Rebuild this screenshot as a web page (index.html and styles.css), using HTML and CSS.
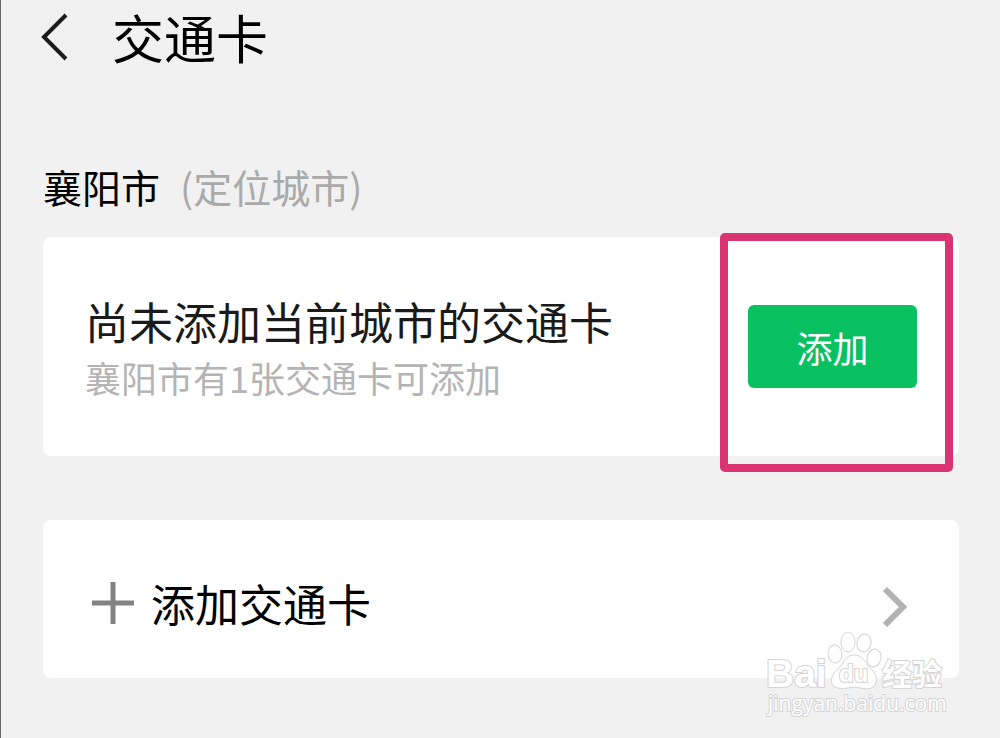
FILE: index.html
```html
<!DOCTYPE html>
<html lang="zh-CN">
<head>
  <meta charset="UTF-8">
  <meta name="viewport" content="width=device-width, initial-scale=1">
  <title>交通卡</title>
  <link rel="stylesheet" href="styles.css">
</head>
<body>
  <header class="header">
    <button type="button" class="back-btn" aria-label="返回">
      <svg width="27" height="48" viewBox="0 0 27 48" fill="none" stroke="#1c1c1c" stroke-width="4">
        <path d="M25 2 L3 24 L25 46"/>
      </svg>
    </button>
    <h1>交通卡</h1>
  </header>

  <main class="container">
    <h2 class="city">襄阳市 <span class="city-note">(定位城市)</span></h2>

    <!-- Current city card -->
    <section class="card city-card">
      <div class="card-text">
        <h3>尚未添加当前城市的交通卡</h3>
        <p>襄阳市有1张交通卡可添加</p>
      </div>
      <button type="button" class="add-btn">添加</button>
      <div class="highlight"></div>
    </section>

    <!-- Add another card -->
    <a href="#" class="card add-row">
      <svg width="42" height="42" viewBox="0 0 42 42" stroke="#838383" stroke-width="5">
        <path d="M0 21 H42 M21 0 V42"/>
      </svg>
      <span class="add-label">添加交通卡</span>
      <svg width="24" height="48" viewBox="0 0 24 48" fill="none" stroke="#b2b2b2" stroke-width="6">
        <path d="M2 10 L20 28 L2 46"/>
      </svg>
    </a>
  </main>

  <div class="watermark">
    <svg width="184" height="90" viewBox="0 0 184 90">
      <g class="mark">
        <ellipse cx="71" cy="22" rx="7" ry="9" transform="rotate(-8 71 22)"/>
        <ellipse cx="84" cy="10" rx="7" ry="10"/>
        <ellipse cx="100" cy="11" rx="7" ry="9" transform="rotate(12 100 11)"/>
        <ellipse cx="110" cy="26" rx="7" ry="9" transform="rotate(12 110 26)"/>
        <path d="M90 23 C99 23 101 31 106 36 C112 41 114 47 111 53 C108 58 101 57 96 56 C92 55 88 55 84 56 C78 57 71 57 68 52 C66 46 69 41 75 36 C80 31 81 23 90 23 Z"/>
        <text class="logo-latin" x="2" y="55">Bai</text>
        <text class="logo-du" x="75" y="50">du</text>
        <text class="logo-cjk" x="118" y="53">经验</text>
        <text class="logo-url" x="4" y="79">jingyan.baidu.com</text>
      </g>
    </svg>
  </div>
</body>
</html>
```

FILE: styles.css
```css
* {
  box-sizing: border-box;
}
body {
  margin: 0;
  min-height: 100vh;
  position: relative;
  background-color: #f1f1f1;
  border-left: 1px solid #666;
  font-family: "Noto Sans CJK SC", sans-serif;
  color: #000;
}
h1, h2, h3, p {
  margin: 0;
  font-weight: normal;
}
button {
  border: none;
  font-family: inherit;
  cursor: pointer;
}
svg {
  display: block;
  flex: none;
}
.header {
  display: flex;
  align-items: center;
  gap: 44px;
  height: 74px;
  padding: 0 40px;
}
.back-btn {
  padding: 0;
  background: none;
}
h1 {
  font-size: 52px;
  line-height: 74px;
}
.container {
  padding: 84px 41px 60px 42px;
}
.city {
  display: flex;
  gap: 20px;
  margin-bottom: 22px;
  font-size: 39px;
  line-height: 57px;
}
.city-note {
  color: #aaa;
}
.card {
  display: flex;
  align-items: center;
  background: #fff;
  border-radius: 8px;
}
.city-card {
  position: relative;
  justify-content: space-between;
  min-height: 219px;
  margin-bottom: 64px;
  padding: 0 42px;
}
.card-text h3 {
  font-size: 44px;
  line-height: 60px;
  color: #1a1a1a;
}
.card-text p {
  font-size: 36px;
  line-height: 52px;
  color: #b4b4b4;
}
.add-btn {
  width: 169px;
  height: 83px;
  padding: 0;
  border-radius: 6px;
  background-color: #09c161;
  color: #fff;
  font-size: 36px;
}
.highlight {
  position: absolute;
  top: -4px;
  right: 6px;
  bottom: -16px;
  width: 233px;
  border: 8px solid #da3473;
  border-radius: 5px;
  pointer-events: none;
}
.add-row {
  min-height: 158px;
  padding: 8px 52px 0 49px;
  gap: 17px;
  color: #000;
  text-decoration: none;
}
.add-label {
  flex: 1;
  font-size: 44px;
  line-height: 64px;
}
.watermark {
  position: absolute;
  right: 52px;
  bottom: 16px;
}
.mark {
  fill: #fff;
  stroke: #d4d4d4;
  stroke-width: 1px;
}
.mark text {
  stroke-width: 2px;
  paint-order: stroke;
}
.logo-latin {
  font: bold 39px "Liberation Sans", sans-serif;
}
.logo-du {
  font: bold 24px "Liberation Sans", sans-serif;
}
.logo-cjk {
  font: bold 30px "Noto Sans CJK SC", sans-serif;
}
.logo-url {
  font: 21px "Open Sans", sans-serif;
}
```
